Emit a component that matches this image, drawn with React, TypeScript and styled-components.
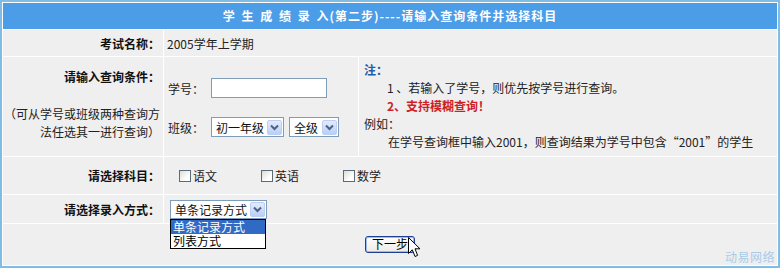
import React from "react";
import styled, { createGlobalStyle } from "styled-components";

const GlobalStyle = createGlobalStyle`
  html, body { margin: 0; padding: 0; background: #fff; }
  body {
    font-family: "Noto Sans CJK SC", "Noto Sans", sans-serif;
    font-size: 12px;
    color: #222;
  }
`;

const Frame = styled.div`
  position: relative;
  width: 780px;
  height: 268px;
  box-sizing: border-box;
  border: 2px solid #80bde6;
  padding: 1px;
  background: #fff;
  display: flex;
  flex-direction: column;
  gap: 1px;
`;

const Header = styled.div`
  height: 26px;
  flex: none;
  background: #4b9de8;
  color: #fff;
  font-weight: bold;
  display: flex;
  align-items: center;
  justify-content: center;
  letter-spacing: 1px;
  word-spacing: 2px;
  white-space: pre;
  line-height: 1;
`;

const Row = styled.div<{ $h: number; $cols?: string }>`
  display: grid;
  grid-template-columns: ${(p) => p.$cols || "160px 1fr"};
  gap: 1px;
  height: ${(p) => p.$h}px;
  flex: none;
`;

const Label = styled.div`
  background: #efefef;
  font-weight: bold;
  color: #111;
  padding-right: 3px;
  display: flex;
  align-items: center;
  justify-content: flex-end;
  white-space: nowrap;
`;

const StackLabel = styled.div`
  background: #efefef;
  padding: 11px 3px 0 0;
  text-align: right;
  line-height: 18px;
  white-space: nowrap;
`;

const StackTitle = styled.div`
  font-weight: bold;
  color: #111;
`;

const StackNote = styled.div`
  margin-top: 19px;
  color: #222;
`;

const Cell = styled.div<{ $pl?: number }>`
  background: #efefef;
  display: flex;
  align-items: center;
  padding-left: ${(p) => p.$pl ?? 3}px;
  white-space: nowrap;
`;

const QueryCell = styled.div`
  background: #efefef;
  padding: 21px 0 0 4px;
  display: flex;
  flex-direction: column;
  gap: 19px;
`;

const FieldLine = styled.div`
  display: flex;
  align-items: center;
  height: 20px;
  gap: 5px;
`;

const FieldName = styled.span`
  width: 38px;
  white-space: nowrap;
`;

const TextInput = styled.div`
  width: 116px;
  height: 20px;
  box-sizing: border-box;
  border: 1px solid #7f9db9;
  background: #fff;
`;

const SelectBox = styled.div<{ $w: number; $h?: number }>`
  position: relative;
  display: inline-flex;
  align-items: center;
  justify-content: space-between;
  width: ${(p) => p.$w}px;
  height: ${(p) => p.$h ?? 20}px;
  box-sizing: border-box;
  border: 1px solid #7f9db9;
  background: #fff;
  padding: 0 1px 0 4px;
  white-space: nowrap;
  color: #111;
`;

const SelectArrow = styled.span`
  width: 15px;
  height: 15px;
  box-sizing: border-box;
  border: 1px solid #bccef3;
  border-radius: 2px;
  background: linear-gradient(#e3ecfd, #b9cff7);
  display: flex;
  align-items: center;
  justify-content: center;
`;

const SelectGroup = styled.div`
  display: flex;
  gap: 5px;
`;

const NoteCell = styled.div`
  background: #efefef;
  padding: 4px 0 0 5px;
  line-height: 18px;
  white-space: nowrap;
`;

const NoteLine = styled.div<{ $indent?: number; $tone?: "title" | "alert" }>`
  padding-left: ${(p) => p.$indent ?? 0}px;
  color: ${(p) =>
    p.$tone === "title" ? "#1d5cab" : p.$tone === "alert" ? "#cc1f2a" : "#222"};
  font-weight: ${(p) => (p.$tone ? "bold" : "normal")};
`;

const CheckGroup = styled.div`
  display: flex;
  align-items: center;
`;

const CheckItem = styled.label`
  width: 82px;
  display: flex;
  align-items: center;
  gap: 2px;
`;

const CheckBox = styled.span`
  width: 12px;
  height: 12px;
  box-sizing: border-box;
  border: 1px solid #5b6b7c;
  background: linear-gradient(135deg, #dcdcd6, #fff 70%);
`;

const ListBox = styled.div`
  position: absolute;
  left: -1px;
  top: 18px;
  width: 96px;
  box-sizing: border-box;
  border: 1px solid #000;
  background: #fff;
  z-index: 2;
`;

const ListOption = styled.div<{ $active?: boolean }>`
  height: 14px;
  line-height: 14px;
  padding-left: 2px;
  background: ${(p) => (p.$active ? "#316ac5" : "#fff")};
  color: ${(p) => (p.$active ? "#fff" : "#000")};
`;

const ButtonCell = styled.div`
  background: #efefef;
  display: flex;
  justify-content: center;
  padding-top: 11px;
`;

const ButtonWrap = styled.div`
  position: relative;
  height: 17px;
`;

const NextButton = styled.button`
  width: 50px;
  height: 17px;
  box-sizing: border-box;
  padding: 0;
  border: 1px solid #1e3f94;
  border-radius: 3px;
  box-shadow: inset 0 0 0 1px #9bb9f2;
  background: linear-gradient(#ffffff, #ecebe4);
  font-family: inherit;
  font-size: 12px;
  line-height: 14px;
  color: #000;
`;

const Cursor = styled.svg`
  position: absolute;
  left: 43px;
  top: 2px;
`;

const Watermark = styled.div`
  position: absolute;
  right: 3px;
  bottom: 3px;
  font-size: 12px;
  line-height: 12px;
  color: #a9cbe9;
  letter-spacing: 0.5px;
`;

const Chevron = () => (
  <svg width="9" height="7" viewBox="0 0 9 7">
    <path d="M1 1.5 L4.5 5 L8 1.5" fill="none" stroke="#4d6185" strokeWidth="2" />
  </svg>
);

const Select = ({ value, width, height, children }: { value: string; width: number; height?: number; children?: React.ReactNode }) => (
  <SelectBox $w={width} $h={height}>
    <span>{value}</span>
    <SelectArrow>
      <Chevron />
    </SelectArrow>
    {children}
  </SelectBox>
);

const subjects = ["语文", "英语", "数学"];

export default function App() {
  return (
    <>
      <GlobalStyle />
      <Frame>
        <Header>学 生 成 绩 录 入(第二步)----请输入查询条件并选择科目</Header>

        <Row $h={26}>
          <Label>考试名称：</Label>
          <Cell>2005学年上学期</Cell>
        </Row>

        <Row $h={99} $cols="160px 194px 1fr">
          <StackLabel>
            <StackTitle>请输入查询条件：</StackTitle>
            <StackNote>
              （可从学号或班级两种查询方
              <br />
              法任选其一进行查询）
            </StackNote>
          </StackLabel>
          <QueryCell>
            <FieldLine>
              <FieldName>学号：</FieldName>
              <TextInput />
            </FieldLine>
            <FieldLine>
              <FieldName>班级：</FieldName>
              <SelectGroup>
                <Select value="初一年级" width={73} />
                <Select value="全级" width={50} />
              </SelectGroup>
            </FieldLine>
          </QueryCell>
          <NoteCell>
            <NoteLine $tone="title">注：</NoteLine>
            <NoteLine $indent={23}>1 、若输入了学号，则优先按学号进行查询。</NoteLine>
            <NoteLine $indent={23} $tone="alert">2、支持模糊查询！</NoteLine>
            <NoteLine>例如：</NoteLine>
            <NoteLine $indent={24}>在学号查询框中输入2001，则查询结果为学号中包含“2001”的学生</NoteLine>
          </NoteCell>
        </Row>

        <Row $h={37}>
          <Label>请选择科目：</Label>
          <Cell $pl={15}>
            <CheckGroup>
              {subjects.map((s) => (
                <CheckItem key={s}>
                  <CheckBox />
                  {s}
                </CheckItem>
              ))}
            </CheckGroup>
          </Cell>
        </Row>

        <Row $h={28}>
          <Label>请选择录入方式：</Label>
          <Cell $pl={6}>
            <Select value="单条记录方式" width={97} height={19}>
              <ListBox>
                <ListOption $active>单条记录方式</ListOption>
                <ListOption>列表方式</ListOption>
              </ListBox>
            </Select>
          </Cell>
        </Row>

        <Row $h={41} $cols="1fr">
          <ButtonCell>
            <ButtonWrap>
              <NextButton>下一步</NextButton>
              <Cursor width="13" height="21" viewBox="0 0 13 21">
                <path
                  d="M0.5 0.5 L0.5 16.5 L4.3 12.8 L7 19.5 L9.6 18.4 L7 11.8 L12 11.8 Z"
                  fill="#fff"
                  stroke="#000"
                  strokeWidth="1"
                  strokeLinejoin="miter"
                />
              </Cursor>
            </ButtonWrap>
          </ButtonCell>
        </Row>

        <Watermark>动易网络</Watermark>
      </Frame>
    </>
  );
}
